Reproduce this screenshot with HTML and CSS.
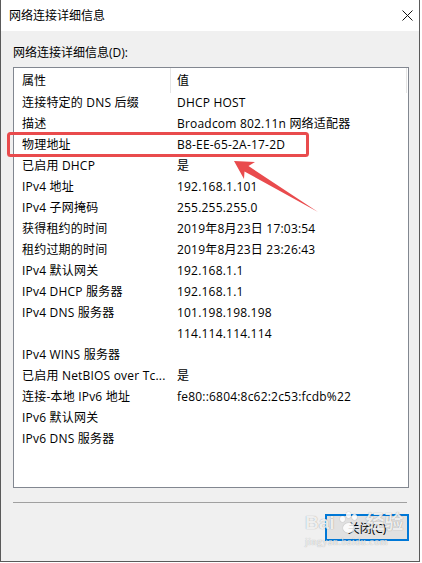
FILE: index.html
```html
<!DOCTYPE html>
<html lang="zh-CN">
<head>
    <meta charset="UTF-8">
    <meta name="viewport" content="width=device-width, initial-scale=1.0">
    <link rel="stylesheet" href="styles.css">
    <title>网络连接详细信息</title>
</head>
<body>
    <div class="dialog">
        <div class="titlebar">
            <span class="title">网络连接详细信息</span>
            <span class="close">
                <svg width="11" height="11" viewBox="0 0 11 11"><path d="M0.5 0.5 L10.5 10.5 M10.5 0.5 L0.5 10.5" stroke="#111" stroke-width="1"/></svg>
            </span>
        </div>
        <div class="content">
            <div class="label">网络连接详细信息(D):</div>
            <div class="listview">
                <div class="lv-header">
                    <div class="lv-head">属性</div>
                    <div class="lv-head">值</div>
                </div>
                <div class="lv-rows">
                    <div class="lv-row"><span>连接特定的 DNS 后缀</span><span>DHCP HOST</span></div>
                    <div class="lv-row"><span>描述</span><span>Broadcom 802.11n 网络适配器</span></div>
                    <div class="lv-row"><span>物理地址</span><span>B8-EE-65-2A-17-2D</span></div>
                    <div class="lv-row"><span>已启用 DHCP</span><span>是</span></div>
                    <div class="lv-row"><span>IPv4 地址</span><span>192.168.1.101</span></div>
                    <div class="lv-row"><span>IPv4 子网掩码</span><span>255.255.255.0</span></div>
                    <div class="lv-row"><span>获得租约的时间</span><span>2019年8月23日 17:03:54</span></div>
                    <div class="lv-row"><span>租约过期的时间</span><span>2019年8月23日 23:26:43</span></div>
                    <div class="lv-row"><span>IPv4 默认网关</span><span>192.168.1.1</span></div>
                    <div class="lv-row"><span>IPv4 DHCP 服务器</span><span>192.168.1.1</span></div>
                    <div class="lv-row"><span>IPv4 DNS 服务器</span><span>101.198.198.198</span></div>
                    <div class="lv-row"><span></span><span>114.114.114.114</span></div>
                    <div class="lv-row"><span>IPv4 WINS 服务器</span><span></span></div>
                    <div class="lv-row"><span>已启用 NetBIOS over Tc...</span><span>是</span></div>
                    <div class="lv-row"><span>连接-本地 IPv6 地址</span><span>fe80::6804:8c62:2c53:fcdb%22</span></div>
                    <div class="lv-row"><span>IPv6 默认网关</span><span></span></div>
                    <div class="lv-row"><span>IPv6 DNS 服务器</span><span></span></div>
                </div>
            </div>
            <div class="separator"></div>
            <div class="actions">
                <button class="btn">关闭(C)</button>
            </div>
        </div>

        <!-- anotación: recuadro rojo y flecha -->
        <svg class="annotation" width="420" height="562" viewBox="0 0 420 562">
            <rect x="8.5" y="133.5" width="299" height="22" rx="2" fill="none" stroke="#e94b4d" stroke-width="3"/>
            <polygon points="234,161 255,162 248.5,166 318,212 244.5,171.5 244,179" fill="#e94b4d"/>
        </svg>

        <div class="watermark">
            <div class="wm-logo">Bai<span class="paw"><i></i><i></i><i></i><b></b></span>经验</div>
            <div class="wm-url">jingyan.baidu.com</div>
        </div>
    </div>
</body>
</html>
```

FILE: styles.css
```css
body {
    margin: 0;
    padding: 0;
    background-color: #ffffff;
    font-family: "Open Sans", "Noto Sans CJK SC", sans-serif;
    font-size: 12px;
    color: #000;
}

.dialog {
    position: relative;
    box-sizing: border-box;
    width: 420px;
    height: 562px;
    border: 1px solid #5a5a5a;
    border-top: none;
    background-color: #f0f0f0;
    display: flex;
    flex-direction: column;
}

.titlebar {
    height: 31px;
    background-color: #ffffff;
    display: flex;
    align-items: center;
    justify-content: space-between;
    padding-left: 8px;
}

.title {
    line-height: 16px;
}

.close {
    width: 24px;
    height: 31px;
    display: flex;
    align-items: center;
    justify-content: center;
}

.content {
    flex: 1;
    display: flex;
    flex-direction: column;
    padding: 14px 10px 0 12px;
}

.label {
    line-height: 16px;
}

.listview {
    box-sizing: border-box;
    margin-top: 6px;
    height: 421px;
    border: 1px solid #828790;
    background-color: #ffffff;
}

.lv-header {
    display: grid;
    grid-template-columns: 157px 236px;
    height: 24px;
}

.lv-head {
    border-right: 1px solid #e5e5e5;
    line-height: 25px;
    padding-left: 8px;
}

.lv-head + .lv-head {
    padding-left: 6px;
}

.lv-row {
    display: grid;
    grid-template-columns: 157px 1fr;
    height: 21px;
    line-height: 22px;
    white-space: nowrap;
    letter-spacing: 0.2px;
}

.lv-row span:first-child {
    padding-left: 8px;
}

.lv-row span:last-child {
    padding-left: 6px;
}

.separator {
    margin-top: 14px;
    margin-right: 2px;
    height: 1px;
    background-color: #a0a0a0;
}

.actions {
    display: flex;
    justify-content: flex-end;
    margin-top: 11px;
}

.btn {
    width: 84px;
    height: 27px;
    padding: 0;
    border: 2px solid #0078d7;
    background-color: #e1e1e1;
    font-family: inherit;
    font-size: 12px;
    color: #000;
}

.annotation {
    position: absolute;
    top: 0;
    left: -1px;
    pointer-events: none;
}

.watermark {
    position: absolute;
    left: 304px;
    top: 510px;
    color: rgba(255, 255, 255, 0.85);
    text-shadow: 0 0 1px rgba(0, 0, 0, 0.4);
    pointer-events: none;
}

.wm-logo {
    display: flex;
    align-items: flex-end;
    font-family: "Liberation Sans", "Noto Sans CJK SC", sans-serif;
    font-weight: bold;
    font-size: 19px;
    line-height: 26px;
}

.paw {
    position: relative;
    width: 24px;
    height: 26px;
    margin: 0 4px 0 3px;
}

.paw i, .paw b {
    position: absolute;
    background: rgba(255, 255, 255, 0.85);
    box-shadow: 0 0 1px rgba(0, 0, 0, 0.4);
    border-radius: 50%;
}

.paw i {
    width: 5px;
    height: 6px;
    top: 2px;
}

.paw i:nth-child(1) { left: 2px; top: 6px; }
.paw i:nth-child(2) { left: 8px; }
.paw i:nth-child(3) { left: 14px; top: 4px; }

.paw b {
    width: 12px;
    height: 10px;
    left: 5px;
    top: 13px;
}

.wm-url {
    font-family: "Liberation Serif", serif;
    font-size: 10px;
    line-height: 12px;
    letter-spacing: 0.5px;
}
```
